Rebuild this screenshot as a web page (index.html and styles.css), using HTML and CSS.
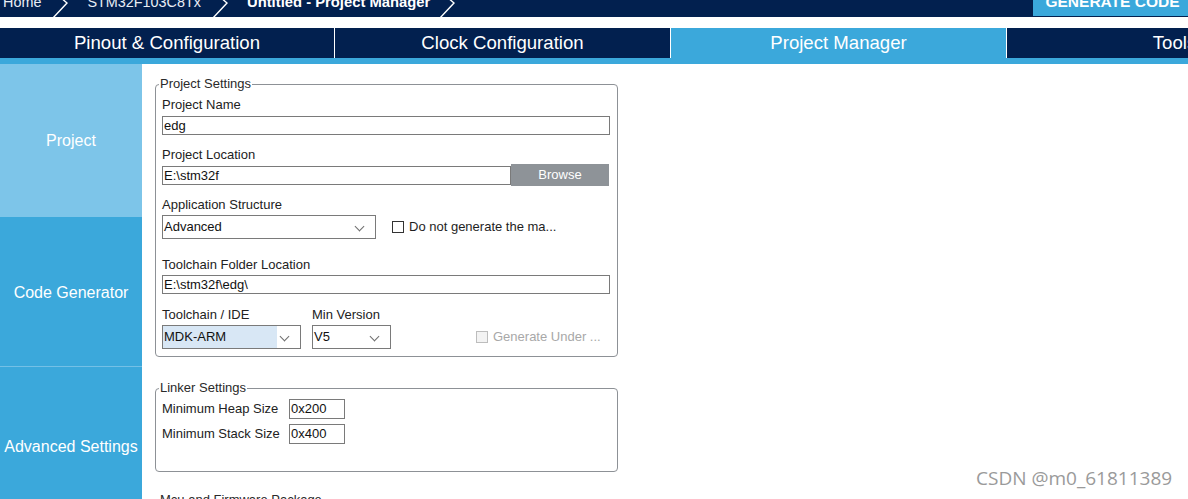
FILE: index.html
```html
<!DOCTYPE html>
<html>
<head>
<meta charset="utf-8">
<link rel="stylesheet" href="styles.css">
</head>
<body>
<div class="page">
  <header class="topbar">
    <nav class="crumbs">
      <span class="crumb first">Home</span>
      <svg class="sep" viewBox="0 0 17 18" width="17" height="18"><polyline points="9,-3 16,3 1,19" /></svg>
      <span class="crumb">STM32F103C8Tx</span>
      <svg class="sep" viewBox="0 0 17 18" width="17" height="18"><polyline points="9,-3 16,3 1,19" /></svg>
      <span class="crumb current">Untitled - Project Manager</span>
      <svg class="sep" viewBox="0 0 17 18" width="17" height="18"><polyline points="9,-3 16,3 1,19" /></svg>
    </nav>
    <button class="generate"><span class="gen-label">GENERATE CODE</span></button>
  </header>

  <div class="tabs">
    <div class="tab">Pinout &amp; Configuration</div>
    <div class="tab">Clock Configuration</div>
    <div class="tab active">Project Manager</div>
    <div class="tab">Tools</div>
  </div>
  <div class="tabstrip"></div>

  <div class="body">
    <aside class="sidebar">
      <div class="side-item selected">Project</div>
      <div class="side-item">Code Generator</div>
      <div class="side-item last">Advanced Settings</div>
    </aside>

    <main class="content">
      <fieldset class="group">
        <legend>Project Settings</legend>

        <div class="field f1">
          <div class="label">Project Name</div>
          <div class="input wide">edg</div>
        </div>

        <div class="field f2">
          <div class="label">Project Location</div>
          <div class="row loc">
            <div class="input locinput">E:\stm32f</div>
            <div class="browse">Browse</div>
          </div>
        </div>

        <div class="field f3">
          <div class="label">Application Structure</div>
          <div class="row">
            <div class="select appsel"><span class="seltext">Advanced</span><span class="chev"></span></div>
            <label class="check"><span class="box"></span><span>Do not generate the ma...</span></label>
          </div>
        </div>

        <div class="field f4">
          <div class="label">Toolchain Folder Location</div>
          <div class="input wide">E:\stm32f\edg\</div>
        </div>

        <div class="field f5">
          <div class="row tc">
            <div class="col">
              <div class="label">Toolchain / IDE</div>
              <div class="select ide"><span class="seltext hl">MDK-ARM</span><span class="chev"></span></div>
            </div>
            <div class="col">
              <div class="label">Min Version</div>
              <div class="select ver"><span class="seltext">V5</span><span class="chev"></span></div>
            </div>
            <label class="check disabled"><span class="box"></span><span>Generate Under ...</span></label>
          </div>
        </div>
      </fieldset>

      <fieldset class="group linker">
        <legend>Linker Settings</legend>
        <div class="kv">
          <div class="label">Minimum Heap Size</div>
          <div class="input small">0x200</div>
          <div class="label">Minimum Stack Size</div>
          <div class="input small">0x400</div>
        </div>
      </fieldset>

      <fieldset class="group mcu">
        <legend>Mcu and Firmware Package</legend>
        <div class="spacer"></div>
      </fieldset>
    </main>
  </div>

  <div class="watermark">CSDN @m0_61811389</div>
</div>
</body>
</html>
```

FILE: styles.css
```css
* { box-sizing: border-box; }

html, body {
  margin: 0;
  padding: 0;
  background: #ffffff;
}

body {
  width: 1188px;
  height: 499px;
  overflow: hidden;
  font-family: "Liberation Sans", Arial, sans-serif;
  color: #1e1e1e;
}

.page {
  position: relative;
  width: 1188px;
  height: 499px;
  overflow: hidden;
}

/* ---------- top bar ---------- */
.topbar {
  height: 17px;
  background: #02204f;
  display: flex;
  justify-content: space-between;
  overflow: hidden;
}

.crumbs {
  display: flex;
  align-items: flex-start;
  padding-left: 3px;
  height: 17px;
}

.crumb {
  font-size: 14.4px;
  line-height: 14px;
  margin-top: -5px;
  color: #e8edf5;
  white-space: nowrap;
}

.crumb.current {
  font-weight: bold;
  color: #ffffff;
  font-size: 14.8px;
}

.sep {
  flex: none;
  margin: 0 19px 0 10px;
  height: 18px;
}

.sep polyline {
  fill: none;
  stroke: #ffffff;
  stroke-width: 1.4;
}

.crumb.current + .sep { margin-left: 8px; }

.generate {
  width: 155px;
  height: 16px;
  border: none;
  margin: 0;
  padding: 0;
  background: #3ba8db;
  color: #ffffff;
  font-family: "Liberation Sans", Arial, sans-serif;
  display: flex;
  align-items: flex-start;
  justify-content: center;
  overflow: hidden;
}

.gen-label {
  font-weight: bold;
  font-size: 15.5px;
  line-height: 15px;
  margin-top: -6px;
  margin-left: 4px;
  white-space: nowrap;
}

/* ---------- tabs ---------- */
.tabs {
  margin-top: 11px;
  height: 30px;
  background: #02204f;
  display: flex;
  overflow: hidden;
}

.tab {
  flex: none;
  width: 336px;
  height: 30px;
  border-right: 1px solid #ffffff;
  color: #ffffff;
  font-size: 18.6px;
  line-height: 30px;
  text-align: center;
  white-space: nowrap;
}

.tab:first-child { width: 335px; }

.tab.active { background: #3ba8db; }

.tabstrip {
  height: 6px;
  background: #3ba8db;
}

/* ---------- body ---------- */
.body {
  display: flex;
}

.sidebar {
  flex: none;
  width: 142px;
  background: #3ba8db;
  display: flex;
  flex-direction: column;
}

.side-item {
  height: 153px;
  display: flex;
  align-items: center;
  justify-content: center;
  color: #ffffff;
  font-size: 16px;
  white-space: nowrap;
}

.side-item.selected {
  background: #7dc5e9;
}

.side-item:nth-child(2) {
  height: 150px;
  border-bottom: 1px solid #74c0e6;
  padding-top: 2px;
}

.side-item.last {
  height: 158px;
  padding-top: 2px;
}

.content {
  flex: 1;
  padding: 12px 0 0 13px;
}

/* ---------- fieldsets ---------- */
.group {
  width: 463px;
  margin: 0;
  padding: 0 7px 7px 6px;
  border: 1px solid #8d9196;
  border-radius: 4px;
  font-size: 13px;
}

.group legend {
  margin-left: -3px;
  padding: 0 1px;
  font-size: 13px;
  line-height: 16px;
  color: #2a2a2a;
}

.label {
  font-size: 13px;
  line-height: 16px;
  color: #222222;
  white-space: nowrap;
}

.input {
  height: 19px;
  border: 1px solid #7a7a7a;
  background: #ffffff;
  font-size: 13px;
  line-height: 17px;
  padding-left: 1px;
  color: #111111;
  white-space: nowrap;
}

.input.wide { width: 448px; }

.field .label + .input,
.field .label + .row,
.field .label + .select { margin-top: 2px; }

.f1 { margin-top: 5px; }
.f1 .label + .input { margin-top: 3px; }

.f2 { margin-top: 12px; }
.f2 .label + .row { margin-top: 1px; }

.f3 { margin-top: 11px; }
.f4 { margin-top: 18px; }
.f5 { margin-top: 13px; }

.row {
  display: flex;
  align-items: center;
}

.row.loc { height: 22px; }

.locinput { width: 349px; }

.browse {
  width: 98px;
  height: 22px;
  background: #8e9398;
  color: #ffffff;
  font-size: 13px;
  line-height: 22px;
  text-align: center;
}

.select {
  position: relative;
  height: 24px;
  border: 1px solid #7a7a7a;
  background: #ffffff;
  display: flex;
  align-items: center;
}

.seltext {
  height: 22px;
  line-height: 22px;
  padding-left: 1px;
  font-size: 13px;
  color: #111111;
}

.seltext.hl {
  background: #d8e7f5;
  width: 114px;
}

.chev {
  position: absolute;
  top: 7px;
  width: 7px;
  height: 7px;
  border-right: 1px solid #6e6e6e;
  border-bottom: 1px solid #6e6e6e;
  transform: rotate(45deg);
}

.appsel { width: 214px; }
.appsel .chev { left: 193px; }

.check {
  display: flex;
  align-items: center;
  margin-left: 16px;
  padding-bottom: 1px;
  font-size: 13px;
  color: #1e1e1e;
  white-space: nowrap;
}

.check .box {
  width: 12px;
  height: 12px;
  border: 1px solid #333333;
  background: #ffffff;
  margin-right: 5px;
}

.tc {
  align-items: flex-end;
}

.col .label { margin-bottom: 2px; }

.ide { width: 139px; }
.ide .chev { left: 118px; }

.ver { width: 79px; }
.ver .chev { left: 58px; }

.tc .col + .col { margin-left: 11px; }

.check.disabled {
  margin-left: 85px;
  height: 24px;
  color: #a8a8a8;
}

.check.disabled .box {
  border-color: #bdbdbd;
  background: #f3f3f3;
}

/* linker */
.linker { margin-top: 23px; padding-bottom: 27px; }

.kv {
  display: grid;
  grid-template-columns: 127px 56px;
  grid-auto-rows: 20px;
  row-gap: 5px;
  align-items: center;
  margin-top: 3px;
}

.input.small {
  width: 56px;
  height: 20px;
  line-height: 18px;
}

.mcu { margin-top: 20px; }
.spacer { height: 40px; }

/* watermark */
.watermark {
  position: absolute;
  left: 976px;
  top: 465px;
  font-family: "Open Sans", "Noto Sans", sans-serif;
  font-size: 19px;
  line-height: 26px;
  color: #9a9a9a;
  white-space: nowrap;
}
```
